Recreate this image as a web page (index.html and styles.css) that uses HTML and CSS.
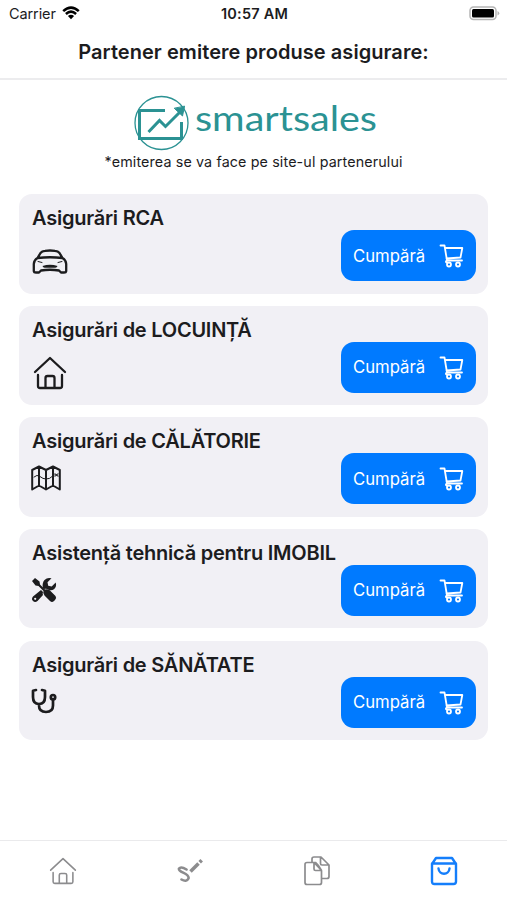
FILE: index.html
```
<!DOCTYPE html>
<html lang="ro">
<head>
  <meta charset="UTF-8">
  <title>Partener emitere produse asigurare</title>
  <link rel="stylesheet" href="styles.css">
</head>
<body>
  <!-- Shared icons -->
  <svg class="sprite" aria-hidden="true">
    <symbol id="cart" viewBox="0 0 26 24">
      <path d="M2.500 1.500H6.500L9 16.500H24M7 4H24.300L22.500 13.500L8.500 14.500M9 16.500C7.500 17 7.500 18.500 9 18.500"/>
      <circle cx="11" cy="20.500" r="2"/>
      <circle cx="20" cy="20.500" r="2"/>
    </symbol>
    <symbol id="home" viewBox="0 0 34 36">
      <path d="M2 17L17 3L32 17M5 20V31Q5 33 7 33H27Q29 33 29 31V20M12.500 33V23Q12.500 21 14.500 21H19.500Q21.500 21 21.500 23V33"/>
    </symbol>
  </svg>

  <div class="status-bar">
    <div class="carrier">
      <span>Carrier</span>
      <svg class="wifi" viewBox="0 0 18 14">
        <path d="M1.200 5.200Q9-2 16.800 5.200M3.900 8Q9 3.300 14.100 8"/>
        <path class="dot" d="M5.900 10Q9 7.500 12.100 10L9 13.300Z"/>
      </svg>
    </div>
    <div class="time">10:57 AM</div>
    <svg class="battery" viewBox="0 0 31 15">
      <rect class="battery-case" x="1" y="1" width="26" height="12.500" rx="3.500"/>
      <rect x="3" y="3" width="22" height="8.500" rx="1.500"/>
      <path class="battery-tip" d="M28.500 5Q32 7.200 28.500 9.500Z"/>
    </svg>
  </div>

  <header class="header">
    <h1>Partener emitere produse asigurare:</h1>
  </header>

  <main class="content">
    <div class="partner">
      <svg class="logo" viewBox="0 0 246 56">
        <circle class="logo-ring" cx="30.500" cy="28" r="26.500"/>
        <path class="logo-gap" d="M10 16H38M49 27V40"/>
        <path class="logo-line" d="M34 15.500H8.500V43.500H50.500V27M17.500 37L28.500 25.500L34.500 31.500L50 16"/>
        <path class="logo-head" d="M53.500 11.500L51.500 21L43.500 13.500Z"/>
        <text class="logo-text" x="64" y="35.500" textLength="182" lengthAdjust="spacingAndGlyphs">smartsales</text>
      </svg>
      <p>*emiterea se va face pe site-ul partenerului</p>
    </div>

    <section class="card">
      <h2>Asigurări RCA</h2>
      <svg class="icon car" viewBox="0 0 36 25">
        <path d="M5.500 9L8.500 4Q10 2 13 1.800Q18 1.200 23 1.800Q26 2 27.500 4L30.500 9M5.500 9Q18 7.500 30.500 9Q34 11 34.200 15V22Q34 23.500 32 23.500H29L27 21.500Q18 20 9 21.500L7 23.500H4Q2 23.500 1.800 22V15Q2 11 5.500 9Z"/>
        <path class="thin" d="M6 12.500L10 13.500M30 12.500L26 13.500"/>
        <path class="solid" d="M10.500 17Q18 14.500 25.500 17Q25 19 23 18.800H13Q11 19 10.500 17Z"/>
      </svg>
      <a class="buy" href="#"><span>Cumpără</span><svg><use href="#cart"/></svg></a>
    </section>

    <section class="card">
      <h2>Asigurări de LOCUINȚĂ</h2>
      <svg class="icon house"><use href="#home"/></svg>
      <a class="buy" href="#"><span>Cumpără</span><svg><use href="#cart"/></svg></a>
    </section>

    <section class="card">
      <h2>Asigurări de CĂLĂTORIE</h2>
      <svg class="icon map" viewBox="0 0 30 26">
        <path d="M1.200 5L8 1.500L15 5L22 1.500L28.800 5V24.500L22 20.500L15 24.500L8 20.500L1.200 24.500ZM8 1.500V20.500M15 5V24.500M22 1.500V20.500"/>
        <path class="thin" d="M3 12Q6 9 9 11.500T15 14Q19 14 21 11.500T27 10M24 8.500L27 11.500M27 8.500L24 11.500"/>
      </svg>
      <a class="buy" href="#"><span>Cumpără</span><svg><use href="#cart"/></svg></a>
    </section>

    <section class="card">
      <h2>Asistență tehnică pentru IMOBIL</h2>
      <svg class="icon tools" viewBox="0 0 26 26">
        <path class="solid" d="M4 1L8.500 4.500L9 7.500L14 12.500Q17 11.500 19 13.500L24.500 19Q26 21 24 23L23 24Q21 26 19 24L13.500 18.500Q11.500 16.500 12.500 14L7.500 9L4.500 8.500L1 4Z"/>
        <path class="solid" d="M24.700 5.500Q26 9.500 23 12.200Q20.500 14 18 13Q15.500 11 13 12L11.700 10.700Q11 6 13.500 3Q16.500 0 20.500 1.300L16.500 5.300L17.200 8.800L20.700 9.500Z"/>
        <path class="solid" d="M10 13L12 15Q11.300 17 12 18L6.500 24Q4 26 2 24Q0 22 2 19.500Z"/>
        <circle class="hole" cx="4.200" cy="21.800" r="1.100"/>
      </svg>
      <a class="buy" href="#"><span>Cumpără</span><svg><use href="#cart"/></svg></a>
    </section>

    <section class="card">
      <h2>Asigurări de SĂNĂTATE</h2>
      <svg class="icon stethoscope" viewBox="0 0 26 26">
        <path d="M5 2L2 2.700V9Q2 16 8 16T14 9V2.700L11 2M8 16V17.500Q8 24 15 24T22 17.500V11"/>
        <circle cx="22" cy="9.200" r="2.200"/>
      </svg>
      <a class="buy" href="#"><span>Cumpără</span><svg><use href="#cart"/></svg></a>
    </section>
  </main>

  <nav class="tabs">
    <a href="#" aria-label="Acasă"><svg class="tab-home"><use href="#home"/></svg></a>
    <a href="#" aria-label="Semnătură">
      <svg class="tab-sign" viewBox="0 0 26 26">
        <path class="ink" d="M9.500 11.500Q4 8 2 10.500C.5 14.500 13 15 11.500 20.500Q9.500 24.500 4.500 21.500"/>
        <path class="pen" d="M13.500 13.500L21.500 5.500"/>
        <path class="pen-end" d="M22.700 4.300L24.700 2.300"/>
      </svg>
    </a>
    <a href="#" aria-label="Documente">
      <svg class="tab-docs" viewBox="0 0 28 32">
        <path d="M2 9.500Q2 7.500 4 7.500H11L18.500 15.500V27.500Q18.500 29.500 16.500 29.500H4Q2 29.500 2 27.500ZM11 7.500V14Q11 15.500 12.500 15.500H18.500M9 7V4Q9 2 11 2H18L26 10V21.500Q26 23.500 24 23.500H19M17.500 2V8.500Q17.500 10 19 10H26M11 7.500H12.500Q16 10.500 18.500 15.500"/>
      </svg>
    </a>
    <a class="active" href="#" aria-label="Magazin">
      <svg class="tab-shop" viewBox="0 0 28 32">
        <path d="M2 9L6 3H22L26 9V26.500Q26 29 23.500 29H4.500Q2 29 2 26.500ZM2 8.500H26M8.500 13.500C9 20.500 19 20.500 19.500 13.500"/>
      </svg>
    </a>
  </nav>
</body>
</html>
```
FILE: styles.css
```
* {
  box-sizing: border-box;
}

body {
  margin: 0;
  height: 900px;
  display: flex;
  flex-direction: column;
  background-color: #fff;
  color: #1c1c1e;
  font-family: Inter, "Liberation Sans", sans-serif;
}

h1, h2, p {
  margin: 0;
}

svg {
  display: block;
  flex: none;
  fill: none;
  stroke: currentColor;
  stroke-linecap: round;
  stroke-linejoin: round;
}

.sprite {
  position: absolute;
  width: 0;
  height: 0;
}

/* Status bar */
.status-bar {
  height: 27px;
  display: grid;
  grid-template-columns: 1fr auto 1fr;
  align-items: center;
  padding: 0 7px 0 9px;
  font-size: 14.5px;
}

.carrier {
  display: flex;
  align-items: center;
  gap: 6px;
  letter-spacing: -0.1px;
}

.wifi {
  width: 18px;
  height: 14px;
  margin-top: -2px;
  stroke: #000;
  stroke-width: 2.5;
  stroke-linecap: butt;
}

.wifi .dot {
  fill: #000;
  stroke: none;
}

.time {
  font-weight: 600;
  letter-spacing: 0.2px;
}

.battery {
  justify-self: end;
  width: 31px;
  height: 15px;
  fill: #000;
  stroke: none;
}

.battery-case {
  fill: #fff;
  stroke: #b5b5b5;
  stroke-width: 1.5;
}

.battery-tip {
  fill: #b5b5b5;
}

/* Title */
.header {
  height: 53px;
  display: flex;
  justify-content: center;
  padding-top: 12px;
  border-bottom: 2px solid #ececee;
}

.header h1 {
  font-size: 20px;
  font-weight: 600;
  letter-spacing: 0.06px;
  line-height: 27px;
  white-space: nowrap;
}

/* Partner and product list */
.content {
  flex: 1;
  display: flex;
  flex-direction: column;
  gap: 12.2px;
  padding: 15px 19px 0;
}

.partner {
  height: 87px;
  display: flex;
  flex-direction: column;
  align-items: center;
}

.partner p {
  font-size: 14.3px;
  letter-spacing: 0.13px;
  line-height: 21px;
  white-space: nowrap;
}

.logo {
  width: 246px;
  height: 56px;
  color: #2b9293;
}

.logo-ring {
  stroke-width: 1.3;
}

.logo-gap {
  stroke: #fff;
  stroke-width: 5;
}

.logo-line {
  stroke-width: 3;
  stroke-linecap: butt;
  stroke-linejoin: miter;
}

.logo-head {
  fill: currentColor;
}

.logo-text {
  fill: currentColor;
  stroke: none;
  font-family: Lato, sans-serif;
  font-size: 35px;
}

.card {
  height: 99.4px;
  display: grid;
  grid-template-columns: 1fr 135px;
  grid-template-rows: 36px 51px;
  padding: 0 12px 0 13px;
  border-radius: 13px;
  background-color: #f1f0f5;
}

.card h2 {
  grid-column: 1 / 3;
  padding-top: 11px;
  font-size: 20px;
  font-weight: 600;
  letter-spacing: -0.24px;
  line-height: 27px;
  white-space: nowrap;
}

.icon {
  stroke-width: 2.3;
}

.icon .thin {
  stroke-width: 1;
}

.icon .solid {
  fill: currentColor;
  stroke: none;
}

.icon .hole {
  fill: #f1f0f5;
  stroke: none;
}

.car {
  width: 36px;
  height: 25px;
  margin-top: 19px;
}

.house {
  width: 34px;
  height: 36px;
  margin: 13px 0 0 1px;
}

.map {
  width: 30px;
  height: 26px;
  margin: 12px 0 0 -1px;
  stroke-width: 2;
}

.tools {
  width: 26px;
  height: 26px;
  margin: 12px 0 0 -1px;
}

.stethoscope {
  width: 26px;
  height: 26px;
  margin: 11px 0 0 -1px;
  stroke-width: 2.7;
}

.buy {
  height: 51px;
  display: flex;
  align-items: center;
  justify-content: space-between;
  padding: 0 12px;
  border-radius: 13px;
  background-color: #007aff;
  color: #fff;
  font-size: 16.7px;
  text-decoration: none;
}

.buy svg {
  width: 26px;
  height: 24px;
  margin-top: 1px;
  stroke-width: 1.8;
}

/* Bottom tabs */
.tabs {
  height: 60px;
  display: grid;
  grid-template-columns: repeat(4, 1fr);
  justify-items: center;
  align-items: center;
  border-top: 1px solid #eaeaec;
}

.tabs a {
  color: #8c8c8e;
}

.tabs svg {
  stroke-width: 1.9;
}

.tabs .active {
  color: #147efb;
}

.tab-home {
  width: 28px;
  height: 30px;
}

.tab-sign {
  width: 26px;
  height: 26px;
}

.tab-sign .ink {
  stroke-width: 2.6;
}

.tab-sign .pen, .tab-sign .pen-end {
  stroke-width: 3.5;
  stroke-linecap: butt;
}

.tab-docs {
  width: 28px;
  height: 32px;
}

.tabs .tab-docs {
  stroke-width: 1.7;
}

.tab-shop {
  width: 28px;
  height: 32px;
}

.tabs .tab-shop {
  stroke-width: 2.4;
}
```
